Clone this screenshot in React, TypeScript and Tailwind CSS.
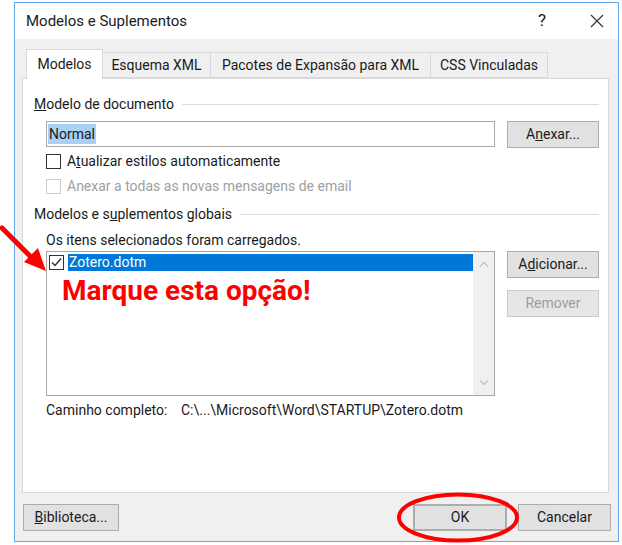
import React from "react"

const font = { fontFamily: "Roboto, 'Noto Sans', sans-serif" }

function Btn({
	children,
	className = "",
	disabled = false,
}: {
	children: React.ReactNode
	className?: string
	disabled?: boolean
}) {
	return (
		<button
			className={`flex h-[27px] w-[92px] items-center justify-center border text-[14px] ${
				disabled
					? "border-[#cbcbcb] bg-[#e6e6e6] text-[#9d9d9d]"
					: "border-[#adadad] bg-[#e1e1e1] text-[#1a1a1a]"
			} ${className}`}
		>
			{children}
		</button>
	)
}

function GroupLabel({ children }: { children: React.ReactNode }) {
	return (
		<div className="flex h-[18px] items-center pr-[9px]">
			<span className="text-[14px] text-[#1a1a1a]">{children}</span>
			<div className="ml-[8px] h-px flex-1 bg-[#dcdcdc]" />
		</div>
	)
}

function CheckBox({ checked = false, disabled = false }: { checked?: boolean; disabled?: boolean }) {
	return (
		<div
			className={`flex h-[15px] w-[15px] items-center justify-center border bg-white ${
				disabled ? "border-[#cccccc]" : "border-[#333333]"
			}`}
		>
			{checked && (
				<svg width="11" height="11" viewBox="0 0 11 11">
					<path d="M1 5.5 L4 8.5 L10 1.5" fill="none" stroke="#333" strokeWidth="1.4" />
				</svg>
			)}
		</div>
	)
}

export default function App() {
	return (
		<div className="relative h-[545px] w-[622px] overflow-hidden bg-white" style={font}>
			<div className="ml-[14px] mt-[2px] flex h-[540px] w-[605px] flex-col border border-[#63a8ea] bg-[#f0f0f0]">
				{/* title bar */}
				<div className="flex h-[36px] items-center bg-white pl-[11px] pr-[14px] text-[15px] text-[#1a1a1a]">
					<span>Modelos e Suplementos</span>
					<span className="ml-auto mr-[44px] text-[17px]">?</span>
					<svg width="14" height="14" viewBox="0 0 14 14">
						<path d="M1 1 L13 13 M13 1 L1 13" stroke="#333" strokeWidth="1.2" />
					</svg>
				</div>

				<div className="flex flex-col pl-[7px] pr-[9px] pt-[9px]">
					{/* tabs */}
					<div className="relative z-10 flex h-[30px] items-end pl-[4px] text-[14px] text-[#1a1a1a]">
						<div className="-mb-px flex h-[30px] w-[77px] items-center justify-center border border-b-0 border-[#d9d9d9] bg-white">
							Modelos
						</div>
						<div className="flex h-[26px] w-[108px] items-center justify-center border-y border-r border-[#d9d9d9] bg-[#f0f0f0]">
							Esquema XML
						</div>
						<div className="flex h-[26px] w-[220px] items-center justify-center border-y border-r border-[#d9d9d9] bg-[#f0f0f0]">
							Pacotes de Expansão para XML
						</div>
						<div className="flex h-[26px] w-[117px] items-center justify-center border-y border-r border-[#d9d9d9] bg-[#f0f0f0]">
							CSS Vinculadas
						</div>
					</div>

					{/* panel */}
					<div className="flex h-[415px] flex-col border border-[#d9d9d9] bg-white pl-[11px] pt-[16px]">
						<GroupLabel>
							<span className="underline">M</span>odelo de documento
						</GroupLabel>

						<div className="mt-[8px] flex items-start pl-[12px]">
							<div className="flex h-[26px] w-[449px] items-center border border-[#a8a8a8] px-[1px]">
								<span className="bg-[#a9d1f5] px-[1px] text-[14px] leading-[20px] text-[#1a1a1a]">Normal</span>
							</div>
							<Btn className="ml-[12px]">
								A<span className="underline">n</span>exar...
							</Btn>
						</div>

						<div className="mt-[5px] flex h-[16px] items-center gap-[6px] pl-[12px] text-[14px] text-[#1a1a1a]">
							<CheckBox />
							<span>
								A<span className="underline">t</span>ualizar estilos automaticamente
							</span>
						</div>
						<div className="mt-[9px] flex h-[16px] items-center gap-[6px] pl-[12px] text-[14px] text-[#a0a0a0]">
							<CheckBox disabled />
							<span>Anexar a todas as novas mensagens de email</span>
						</div>

						<div className="mt-[11px]">
							<GroupLabel>
								Modelos e s<span className="underline">u</span>plementos globais
							</GroupLabel>
						</div>

						<div className="mt-[8px] pl-[12px] text-[14px] leading-[18px] text-[#1a1a1a]">
							Os itens selecionados foram carregados.
						</div>

						<div className="mt-[2px] flex items-start pl-[12px]">
							<div className="flex h-[145px] w-[449px] border border-[#a8a8a8]">
								<div className="flex flex-1 flex-col pl-[2px] pt-[2px]">
									<div className="flex h-[17px] items-center gap-[4px]">
										<CheckBox checked />
										<span className="flex h-[17px] flex-1 items-center bg-[#0078d7] px-[1px] text-[14px] text-white">
											Zotero.dotm
										</span>
									</div>
									<div className="ml-[13px] mt-[4px] text-[28px] font-bold leading-[32px] text-[#ff0000]">
										Marque esta opção!
									</div>
								</div>
								<div className="flex w-[21px] flex-col items-center justify-between bg-[#f0f0f0] py-[9px]">
									<svg width="10" height="6" viewBox="0 0 10 6">
										<path d="M1 5.5 L5 1.5 L9 5.5" fill="none" stroke="#c4c4c4" strokeWidth="1.5" />
									</svg>
									<svg width="10" height="6" viewBox="0 0 10 6">
										<path d="M1 0.5 L5 4.5 L9 0.5" fill="none" stroke="#c4c4c4" strokeWidth="1.5" />
									</svg>
								</div>
							</div>
							<div className="ml-[12px] flex flex-col gap-[12px]">
								<Btn>
									A<span className="underline">d</span>icionar...
								</Btn>
								<Btn disabled>Remover</Btn>
							</div>
						</div>

						<div className="mt-[5px] flex pl-[12px] text-[14px] leading-[18px] text-[#1a1a1a]">
							<span className="w-[135px]">Caminho completo:</span>
							<span>C:\...\Microsoft\Word\STARTUP\Zotero.dotm</span>
						</div>
					</div>
				</div>

				{/* footer */}
				<div className="mt-[11px] flex pl-[8px] pr-[7px]">
					<Btn className="w-[96px]">
						<span className="underline">B</span>iblioteca...
					</Btn>
					<Btn className="ml-auto w-[94px] border-2 border-[#0078d7]">OK</Btn>
					<Btn className="ml-[11px] w-[93px]">Cancelar</Btn>
				</div>
			</div>

			{/* annotations */}
			<svg className="absolute left-0 top-[220px]" width="52" height="56" viewBox="0 0 52 56">
				<path d="M2 8 L34 40" stroke="#ff0000" strokeWidth="5" strokeLinecap="round" />
				<path d="M46 51 L24 42 L38 28 Z" fill="#ff0000" />
			</svg>
			<svg className="absolute left-[396px] top-[492px]" width="124" height="51" viewBox="0 0 124 51">
				<ellipse cx="62" cy="25.5" rx="59" ry="23" fill="none" stroke="#ff0000" strokeWidth="4" />
			</svg>
		</div>
	)
}
